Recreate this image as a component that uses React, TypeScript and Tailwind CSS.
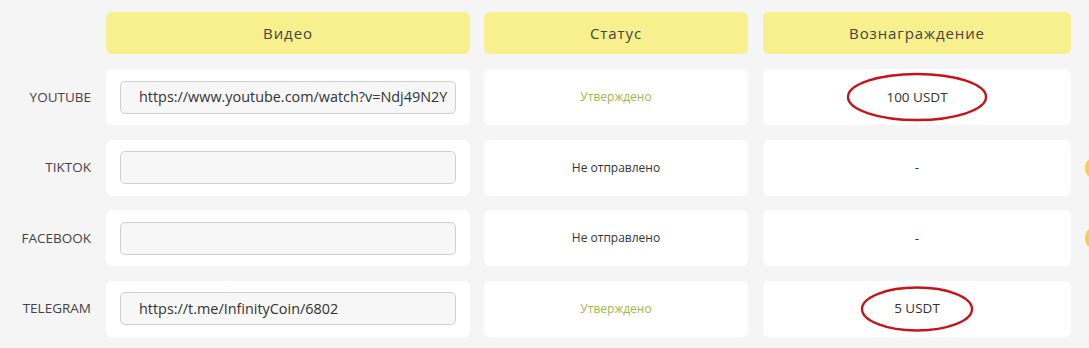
import React from 'react';

type Row = {
  network: string;
  link: string;
  approved: boolean;
  reward: string;
  marked?: 'wide' | 'narrow';
  coin?: boolean;
};

const ROWS: Row[] = [
  { network: 'YOUTUBE', link: 'https://www.youtube.com/watch?v=Ndj49N2Y', approved: true, reward: '100 USDT', marked: 'wide' },
  { network: 'TIKTOK', link: '', approved: false, reward: '-', coin: true },
  { network: 'FACEBOOK', link: '', approved: false, reward: '-', coin: true },
  { network: 'TELEGRAM', link: 'https://t.me/InfinityCoin/6802', approved: true, reward: '5 USDT', marked: 'narrow' },
];

const Ring = ({ w, h }: { w: number; h: number }) => (
  <svg
    width={w}
    height={h}
    viewBox={`0 0 ${w} ${h}`}
    className="pointer-events-none absolute left-1/2 top-1/2 -translate-x-1/2 -translate-y-1/2"
  >
    <ellipse cx={w / 2} cy={h / 2} rx={w / 2 - 2} ry={h / 2 - 2} fill="none" stroke="#c3161c" strokeWidth="2.4" />
  </svg>
);

const head = 'flex h-[42px] shrink-0 items-center justify-center rounded-[6px] bg-[#f8ef8d] text-[15px] tracking-[0.06em] text-[#444]';

const App: React.FC = () => {
  return (
    <div
      className="relative h-[348px] w-full overflow-hidden bg-[#f5f5f6] pt-[12px]"
      style={{ fontFamily: '"Open Sans", "Liberation Sans", sans-serif' }}
    >
      {/* header */}
      <div className="flex">
        <div className="w-[106px] shrink-0" />
        <div className={`${head} w-[364px]`}>Видео</div>
        <div className={`${head} ml-[14px] w-[264px]`}>Статус</div>
        <div className={`${head} ml-[15px] w-[308px]`}>Вознаграждение</div>
      </div>

      {/* rows */}
      <div className="mt-[15px] flex flex-col gap-[14.5px]">
        {ROWS.map((r) => (
          <div key={r.network} className="flex h-[56px]">
            <div className="flex w-[106px] shrink-0 items-center justify-end pr-[15px] text-[13.5px] text-[#444]">{r.network}</div>
            <div className="flex w-[364px] shrink-0 items-center rounded-[6px] bg-white px-[14px]">
              <div className="flex h-[33px] w-full items-center overflow-hidden whitespace-nowrap rounded-[5px] border border-[#cfcfcf] bg-[#f7f7f8] pl-[18px] text-[14.4px] text-[#333]">
                {r.link}
              </div>
            </div>
            <div
              className={`ml-[14px] flex w-[264px] shrink-0 items-center justify-center rounded-[6px] bg-white text-[12px] ${r.approved ? 'text-[#a3b64c]' : 'text-[#333]'}`}
            >
              {r.approved ? 'Утверждено' : 'Не отправлено'}
            </div>
            <div className="relative ml-[15px] flex w-[308px] shrink-0 items-center justify-center rounded-[6px] bg-white text-[13.5px] text-[#333]">
              {r.reward}
              {r.marked === 'wide' && <Ring w={142} h={50} />}
              {r.marked === 'narrow' && <Ring w={114} h={47} />}
            </div>
            {r.coin && (
              <div className="ml-[14px] flex shrink-0 items-center">
                <div className="h-[24px] w-[24px] shrink-0 rounded-full bg-[#f3d43a]" />
              </div>
            )}
          </div>
        ))}
      </div>
    </div>
  );
};

export default App;
